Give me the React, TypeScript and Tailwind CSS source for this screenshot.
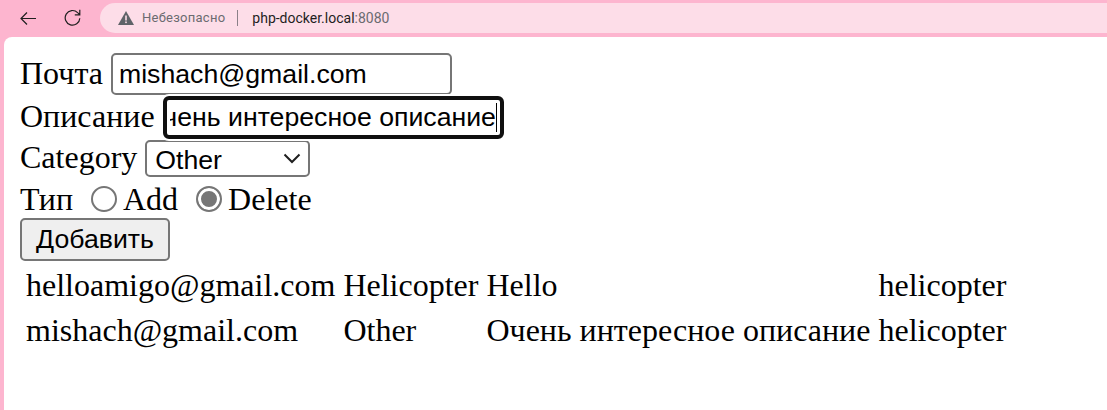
import { useEffect, useRef } from "react";

const rows = [
  ["helloamigo@gmail.com", "Helicopter", "Hello", "helicopter"],
  ["mishach@gmail.com", "Other", "Очень интересное описание", "helicopter"],
];

export default function App() {
  const descRef = useRef<HTMLInputElement>(null);

  useEffect(() => {
    // the focused field is scrolled to the end of its text
    const el = descRef.current;
    if (el) {
      el.focus();
      el.setSelectionRange(el.value.length, el.value.length);
      el.scrollLeft = el.scrollWidth;
    }
  }, []);

  return (
    <div className="w-[1107px] h-[410px] overflow-hidden flex flex-col bg-[#fdb5cf]">
      {/* Browser toolbar */}
      <div className="h-[37px] shrink-0 flex items-start" style={{ fontFamily: "Roboto, sans-serif" }}>
        <svg className="mt-[12px] ml-[20px] w-[16px] h-[13px]" viewBox="0 0 16 13" fill="none" stroke="#1f1f1f" strokeWidth="1.2">
          <path d="M16 6.5H1M7 0.5L1 6.5L7 12.5" />
        </svg>
        <svg className="mt-[9px] ml-[28px] w-[17px] h-[17px]" viewBox="0 0 17 17" fill="none" stroke="#1f1f1f" strokeWidth="1.2">
          <path d="M15.8 9.2A7.3 7.3 0 1 1 13.6 3.6L15.8 5.6M15.8 0.8V5.8H10.8" />
        </svg>
        <div className="mt-[3px] ml-[19px] flex-1 h-[30px] rounded-l-[15px] bg-[#fddde8] flex items-center">
          <svg className="ml-[18px] w-[16px] h-[14px]" viewBox="0 0 16 14">
            <path d="M8 0L16 14H0L8 0Z" fill="#5f6368" />
            <rect x="7.2" y="4.5" width="1.6" height="5" fill="#fddde8" />
            <rect x="7.2" y="10.5" width="1.6" height="1.6" fill="#fddde8" />
          </svg>
          <span className="ml-[8px] text-[13px] text-[#6b6b70] tracking-[0.25px]">Небезопасно</span>
          <span className="ml-[12px] w-px h-[16px] bg-[#8a8088]" />
          <span className="ml-[14px] text-[14px] text-[#1f1f1f]">
            php-docker.local<span className="text-[#6b6b70]">:8080</span>
          </span>
        </div>
      </div>

      {/* Page */}
      <div
        className="flex-1 ml-[4px] rounded-tl-[8px] bg-white pl-[16px] pt-[16px] text-[32px] leading-[37px] text-black"
        style={{ fontFamily: '"Liberation Serif", serif' }}
      >
        <div className="h-[44px] flex items-start">
          <span className="mt-[2px]">Почта</span>
          <input
            readOnly
            value="mishach@gmail.com"
            className="ml-[8px] w-[341px] h-[42px] px-[6px] border-2 border-[#767676] rounded-[5px] text-[26.67px] outline-none bg-white"
            style={{ fontFamily: '"Liberation Sans", sans-serif' }}
          />
        </div>
        <div className="h-[43px] flex items-start">
          <span className="mt-[1px]">Описание</span>
          <div className="ml-[8px] -mt-[1px] relative z-10">
            <input
              ref={descRef}
              readOnly
              value="Очень интересное описание"
              className="block w-[341px] h-[43px] pl-[3px] pr-[4px] border-[4px] border-[#101010] rounded-[6px] text-[26.67px] outline-none bg-white shadow-[0_0_0_2px_#ffffff] caret-transparent"
              style={{ fontFamily: '"Liberation Sans", sans-serif' }}
            />
            <span className="absolute right-[7px] top-[7px] w-px h-[29px] bg-black" />
          </div>
        </div>
        <div className="h-[40px] flex items-start">
          <span className="-mt-[1px]">Category</span>
          <div className="ml-[8px] relative">
            <select
              defaultValue="Other"
              className="block appearance-none w-[165px] h-[37px] pl-[8px] pb-[4px] border-2 border-[#767676] rounded-[5px] text-[26.67px] bg-white"
              style={{ fontFamily: '"Liberation Sans", sans-serif' }}
            >
              <option>Helicopter</option>
              <option>Other</option>
            </select>
            <svg className="absolute left-[138px] top-[13px] w-[18px] h-[11px] pointer-events-none" viewBox="0 0 18 11" fill="none" stroke="#1f1f1f" strokeWidth="2">
              <path d="M1.5 1.5L9 9L16.5 1.5" />
            </svg>
          </div>
        </div>
        <div className="h-[38px] flex items-start">
          <span className="mt-[1px]">Тип</span>
          <input
            type="radio"
            name="kind"
            className="ml-[18px] mt-[6px] w-[26px] h-[26px] appearance-none rounded-full border-2 border-[#767676] bg-white"
          />
          <span className="ml-[6px] mt-[1px]">Add</span>
          <input
            type="radio"
            name="kind"
            defaultChecked
            className="ml-[18px] mt-[6px] w-[26px] h-[26px] appearance-none rounded-full border-2 border-[#767676] bg-white checked:bg-[#767676] checked:shadow-[inset_0_0_0_3px_#ffffff]"
          />
          <span className="ml-[6px] mt-[1px]">Delete</span>
        </div>
        <button
          className="block w-[150px] h-[43px] border-2 border-[#767676] rounded-[5px] bg-[#efefef] text-[26.67px]"
          style={{ fontFamily: '"Liberation Sans", sans-serif' }}
        >
          Добавить
        </button>
        <table className="mt-[1px] border-separate border-spacing-[3.5px]">
          <tbody>
            {rows.map((row) => (
              <tr key={row[0]}>
                {row.map((cell, i) => (
                  <td key={i} className="pl-[3px] pr-[2px] py-[2px] h-[41.5px] whitespace-nowrap">
                    {cell}
                  </td>
                ))}
              </tr>
            ))}
          </tbody>
        </table>
      </div>
    </div>
  );
}
